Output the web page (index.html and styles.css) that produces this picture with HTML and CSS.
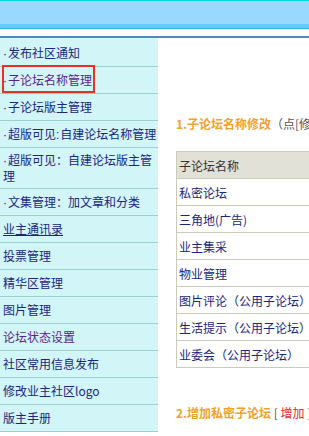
FILE: index.html
```html
<!DOCTYPE html>
<html lang="zh-CN">

<head>
    <meta charset="UTF-8">
    <title>论坛管理</title>
    <link rel="stylesheet" href="styles.css">
</head>

<body>
    <div class="top-bar"></div>
    <div class="top-line"></div>

    <div class="main">
        <div class="side-menu">
            <ul>
                <li><a href="#"><span class="dot">·</span>发布社区通知</a></li>
                <li class="current"><a href="#" class="visited"><span class="dot">·</span>子论坛名称管理</a></li>
                <li><a href="#"><span class="dot">·</span>子论坛版主管理</a></li>
                <li><a href="#"><span class="dot">·</span>超版可见<span class="dot">:</span>自建论坛名称管理</a></li>
                <li class="two-line"><a href="#"><span class="dot">·</span>超版可见：自建论坛版主管理</a></li>
                <li><a href="#"><span class="dot">·</span>文集管理：加文章和分类</a></li>
                <li><a href="#" class="hover">业主通讯录</a></li>
                <li><a href="#">投票管理</a></li>
                <li><a href="#">精华区管理</a></li>
                <li><a href="#">图片管理</a></li>
                <li><a href="#" class="visited">论坛状态设置</a></li>
                <li><a href="#">社区常用信息发布</a></li>
                <li><a href="#">修改业主社区logo</a></li>
                <li><a href="#">版主手册</a></li>
            </ul>
        </div>

        <div class="content">
            <div class="section-title">
                <b>1.子论坛名称修改</b><span class="note">（点[修改]可修改名称）</span>
            </div>
            <table class="forum-table">
                <tr><th>子论坛名称</th></tr>
                <tr><td><a href="#">私密论坛</a></td></tr>
                <tr><td><a href="#">三角地(广告)</a></td></tr>
                <tr><td><a href="#">业主集采</a></td></tr>
                <tr><td><a href="#">物业管理</a></td></tr>
                <tr><td><a href="#">图片评论（公用子论坛）</a></td></tr>
                <tr><td><a href="#">生活提示（公用子论坛）</a></td></tr>
                <tr><td><a href="#">业委会（公用子论坛）</a></td></tr>
            </table>

            <div class="section-title second">
                <b>2.增加私密子论坛</b><span class="note"> [ </span><a href="#" class="add-link">增加</a><span class="note"> ]</span>
            </div>
        </div>
    </div>
</body>

</html>
```

FILE: styles.css
```css
body {
    margin: 0;
    font-family: "Noto Sans CJK SC", "Noto Sans", sans-serif;
    font-size: 12px;
    background-color: white;
    overflow: hidden;
}

.top-bar {
    height: 29px;
    background: linear-gradient(to bottom,
        #00d4e4 0, #00d4e4 1px,
        #99d9ff 1px, #99d9ff 24px,
        #66ccff 24px, #66ccff 28px,
        #22b8ec 28px, #22b8ec 29px);
}

.top-line {
    height: 2px;
    margin-top: 7px;
    background-color: #4a8ac8;
}

.main {
    display: flex;
    align-items: flex-start;
}

.side-menu {
    width: 158px;
    flex-shrink: 0;
    background-color: #d2f5f7;
    padding-top: 2px;
}

.side-menu ul {
    list-style: none;
    margin: 0;
    padding: 0;
}

.side-menu li {
    padding: 5px 0 5px 3px;
    line-height: 16px;
    border-bottom: 1px solid #9ccfd0;
}

.side-menu li.two-line {
    padding-top: 4px;
    padding-bottom: 4px;
}

.side-menu a {
    color: #1a2680;
    text-decoration: none;
}

.side-menu a.visited {
    color: #5c1f8e;
}

.side-menu a.hover {
    text-decoration: underline;
}

.dot {
    font-family: "Liberation Sans", sans-serif;
    line-height: 8px;
    padding-right: 1px;
}

.side-menu .current {
    position: relative;
}

.side-menu .current::after {
    content: "";
    position: absolute;
    left: 2px;
    top: -2px;
    width: 89px;
    height: 24px;
    border: 2px solid #e8321e;
}

.content {
    margin-left: 18px;
    flex: 1;
    white-space: nowrap;
}

.section-title {
    margin-top: 77px;
    height: 18px;
    line-height: 18px;
}

.section-title b {
    color: #f2a12a;
}

.section-title .note {
    color: #555;
}

.section-title.second {
    margin-top: 36px;
}

.add-link {
    color: #e8282a;
    text-decoration: none;
}

.forum-table {
    margin-top: 18px;
    border-collapse: collapse;
    width: 300px;
}

.forum-table th,
.forum-table td {
    border: 1px solid #cccbb8;
    height: 26px;
    padding: 0 2px;
    text-align: left;
    font-weight: normal;
}

.forum-table th {
    background-color: #e1e1d8;
    color: #333;
}

.forum-table td a {
    color: #1a2680;
    text-decoration: none;
}
```
